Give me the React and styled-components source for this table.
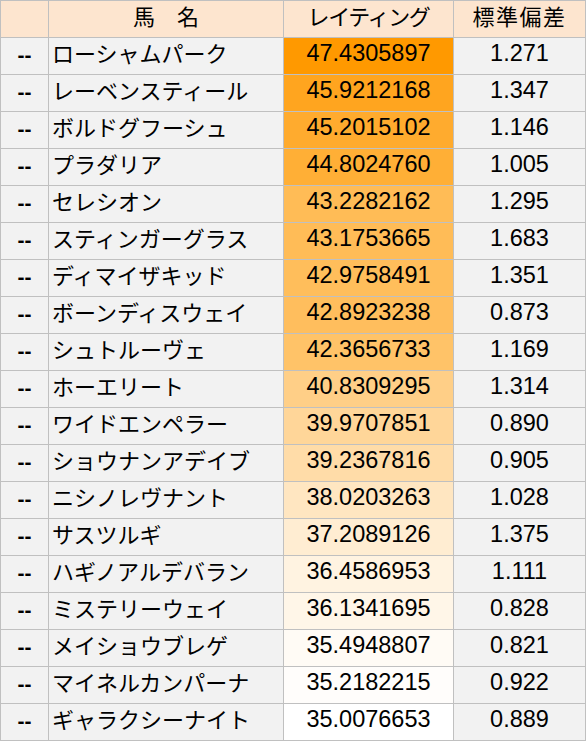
import React from "react";
import styled, { createGlobalStyle } from "styled-components";

const Global = createGlobalStyle`
  html, body { margin: 0; padding: 0; background: #ffffff; }
`;

const rows = [
  ["ローシャムパーク", 47.4305897, "1.271"],
  ["レーベンスティール", 45.9212168, "1.347"],
  ["ボルドグフーシュ", 45.2015102, "1.146"],
  ["プラダリア", 44.802476, "1.005"],
  ["セレシオン", 43.2282162, "1.295"],
  ["スティンガーグラス", 43.1753665, "1.683"],
  ["ディマイザキッド", 42.9758491, "1.351"],
  ["ボーンディスウェイ", 42.8923238, "0.873"],
  ["シュトルーヴェ", 42.3656733, "1.169"],
  ["ホーエリート", 40.8309295, "1.314"],
  ["ワイドエンペラー", 39.9707851, "0.890"],
  ["ショウナンアデイブ", 39.2367816, "0.905"],
  ["ニシノレヴナント", 38.0203263, "1.028"],
  ["サスツルギ", 37.2089126, "1.375"],
  ["ハギノアルデバラン", 36.4586953, "1.111"],
  ["ミステリーウェイ", 36.1341695, "0.828"],
  ["メイショウブレゲ", 35.4948807, "0.821"],
  ["マイネルカンパーナ", 35.2182215, "0.922"],
  ["ギャラクシーナイト", 35.0076653, "0.889"],
];

const Grid = styled.div`
  display: grid;
  grid-template-columns: 47px 234px 169px 131px;
  grid-auto-rows: 36px;
  gap: 1px;
  padding: 1px;
  width: max-content;
  background: #c0c0c0;
`;

const Row = styled.div`
  display: contents;
`;

const Cell = styled.div`
  display: flex;
  align-items: center;
  justify-content: ${(p) => (p.$align === "left" ? "flex-start" : "center")};
  padding: 0 0 ${(p) => (p.$num ? "4px" : "8px")}
    ${(p) => (p.$align === "left" ? "3px" : "0")};
  background: ${(p) => p.$bg || "#f2f2f2"};
  color: #000;
  font-family: ${(p) =>
    p.$num
      ? `"Liberation Sans", Arial, "Noto Sans CJK JP", sans-serif`
      : `"Noto Sans CJK JP", "Liberation Sans", sans-serif`};
  font-size: ${(p) => (p.$num ? "23.5px" : "22px")};
  line-height: 1;
  white-space: nowrap;
`;

const Dash = styled(Cell)`
  font-weight: 700;
  font-size: 21px;
`;

const HeadCell = styled(Cell)`
  background: #fde5cf;
  letter-spacing: ${(p) => p.$spacing || "0"};
`;

const min = 35.0076653;
const max = 47.4305897;
function scale(v) {
  const f = (v - min) / (max - min);
  const g = Math.round(255 - f * (255 - 153));
  const b = Math.round(255 - f * 255);
  return `rgb(255, ${g}, ${b})`;
}

export default function App() {
  return (
    <>
      <Global />
      <Grid>
        <Row>
          <HeadCell />
          <HeadCell>馬　名</HeadCell>
          <HeadCell $spacing="-1.4px">レイティング</HeadCell>
          <HeadCell $spacing="1.5px">標準偏差</HeadCell>
        </Row>
        {rows.map(([name, rating, sd]) => (
          <Row key={name}>
            <Dash $num>--</Dash>
            <Cell $align="left">{name}</Cell>
            <Cell $num $bg={scale(rating)}>
              {rating.toFixed(7)}
            </Cell>
            <Cell $num>{sd}</Cell>
          </Row>
        ))}
      </Grid>
    </>
  );
}
